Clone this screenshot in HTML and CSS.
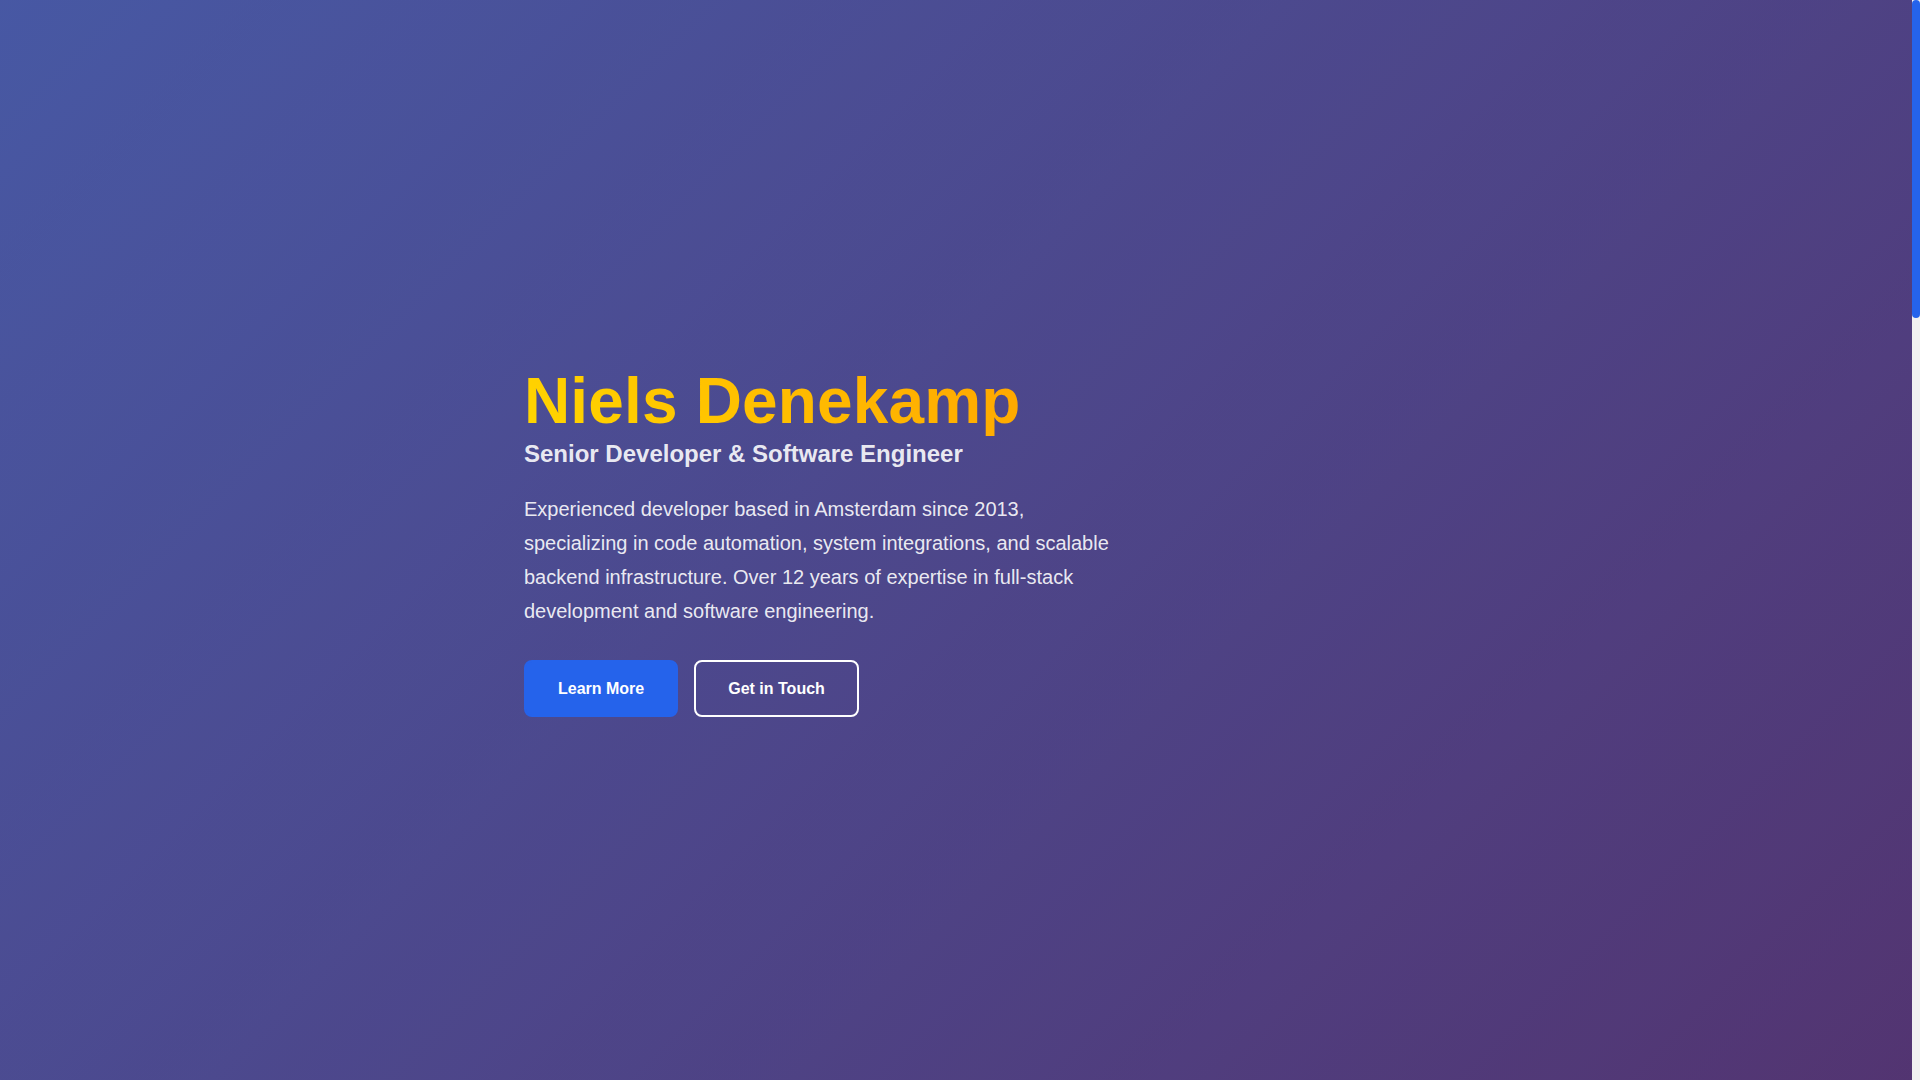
FILE: index.html
```html
<!DOCTYPE html>
<html lang="en">
<head>
<meta charset="utf-8">
<title>Niels Denekamp - Senior Developer &amp; Software Engineer</title>
<link rel="stylesheet" href="styles.css">
</head>
<body>
<section class="hero" id="home">
  <div class="hero-inner">
    <div class="hero-content">
      <h1 class="hero-title">Niels Denekamp</h1>
      <h2 class="hero-subtitle">Senior Developer &amp; Software Engineer</h2>
      <p class="hero-text">Experienced developer based in Amsterdam since 2013, specializing in code automation, system integrations, and scalable backend infrastructure. Over 12 years of expertise in full-stack development and software engineering.</p>
      <div class="hero-buttons">
        <a class="btn btn-primary" href="#about">Learn More</a>
        <a class="btn btn-outline" href="#contact">Get in Touch</a>
      </div>
    </div>
  </div>
</section>
<div class="scrollbar" aria-hidden="true"><div class="scrollbar-thumb"></div></div>
</body>
</html>
```

FILE: styles.css
```css
html,
body {
  margin: 0;
  padding: 0;
}

body {
  padding-right: 8px;
  font-family: "Liberation Sans", Arial, sans-serif;
  color: #333333;
  background: #f1f1f1;
  overflow: hidden;
}

.hero {
  height: 100vh;
  display: flex;
  align-items: center;
  background:
    linear-gradient(rgba(0, 0, 0, 0.3), rgba(0, 0, 0, 0.3)),
    linear-gradient(135deg, #667eea 0%, #764ba2 100%);
  color: #ffffff;
}

.hero-inner {
  width: 100%;
  max-width: 864px;
  margin: 0 auto;
}

.hero-content {
  max-width: 600px;
}

.hero-title {
  margin: 0;
  font-size: 64px;
  line-height: 1.2;
  font-weight: 700;
  letter-spacing: 0.15px;
  display: inline-block;
  background: linear-gradient(45deg, #ffd700, #ffa500);
  -webkit-background-clip: text;
  background-clip: text;
  -webkit-text-fill-color: transparent;
  color: transparent;
}

.hero-subtitle {
  margin: 0 0 24px;
  font-size: 24px;
  line-height: 1.2;
  font-weight: 700;
  color: rgba(255, 255, 255, 0.9);
}

.hero-text {
  margin: 0 0 32px;
  font-size: 20px;
  line-height: 34px;
  color: rgba(255, 255, 255, 0.9);
}

.hero-buttons {
  display: flex;
  gap: 16px;
}

.btn {
  display: inline-block;
  padding: 16px 32px;
  border: 2px solid transparent;
  border-radius: 8px;
  font-size: 16px;
  line-height: 21px;
  font-weight: 700;
  text-decoration: none;
  color: #ffffff;
}

.btn-primary {
  background: #2563eb;
  border-color: #2563eb;
}

.btn-outline {
  background: transparent;
  border-color: #ffffff;
}

/* drawn page scrollbar (track + thumb) */
.scrollbar {
  position: fixed;
  top: 0;
  right: 0;
  width: 8px;
  height: 100vh;
  background: #f1f1f1;
}

.scrollbar-thumb {
  width: 8px;
  height: 318px;
  border-radius: 4px;
  background: #2563eb;
}
```
